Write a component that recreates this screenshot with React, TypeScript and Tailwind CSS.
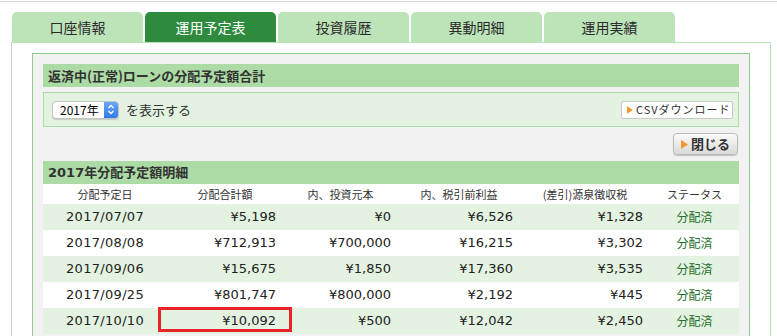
import React from 'react';

const tabs = ['口座情報', '運用予定表', '投資履歴', '異動明細', '運用実績'];

const rows = [
  { date: '2017/07/07', total: '¥5,198', principal: '¥0', profit: '¥6,526', tax: '¥1,328', status: '分配済' },
  { date: '2017/08/08', total: '¥712,913', principal: '¥700,000', profit: '¥16,215', tax: '¥3,302', status: '分配済' },
  { date: '2017/09/06', total: '¥15,675', principal: '¥1,850', profit: '¥17,360', tax: '¥3,535', status: '分配済' },
  { date: '2017/09/25', total: '¥801,747', principal: '¥800,000', profit: '¥2,192', tax: '¥445', status: '分配済' },
  { date: '2017/10/10', total: '¥10,092', principal: '¥500', profit: '¥12,042', tax: '¥2,450', status: '分配済', mark: true },
];

const cols = 'grid grid-cols-[124px_116px_115px_122px_130px_89px]';

function Arrow({ size = 7 }: { size?: number }) {
  return (
    <svg width={size} height={size + 2} viewBox="0 0 7 9" className="shrink-0">
      <polygon points="0,0 7,4.5 0,9" fill="#f5962f" />
    </svg>
  );
}

export default function App() {
  return (
    <div className="w-[777px] h-[336px] overflow-hidden bg-white font-['DejaVu_Sans','Noto_Sans_CJK_JP',sans-serif] text-[#333]">
      <div className="mt-px h-px bg-[#dcdcdc]" />

      {/* タブ */}
      <div className="mt-[10px] pl-[12px] flex gap-[2px]">
        {tabs.map((t, i) => (
          <div
            key={t}
            className={
              'w-[131px] h-[30px] rounded-t-[5px] flex items-center justify-center text-[14px] font-[\'Noto_Sans_CJK_JP\',sans-serif] ' +
              (i === 1 ? 'bg-[#2e8b3e] text-white' : 'bg-[#bde3b9] text-[#2b2b2b]')
            }
          >
            {t}
          </div>
        ))}
      </div>

      <div className="ml-[11px] w-[760px] border border-[#b9e0b4] px-5 pt-[10px] h-[300px]">
        <div className="border border-[#8fce8a] bg-[#f2f2f2] p-[10px] h-[300px]">
          {/* 合計 */}
          <div className="h-[23px] bg-[#acdba5] pl-[5px] flex items-center text-[13px] font-bold text-[#333] font-['Noto_Sans_CJK_JP',sans-serif]">
            返済中(正常)ローンの分配予定額合計
          </div>
          <div className="mt-[5px] h-[35px] border border-[#b0dcab] bg-[#e4f2e2] pl-2 pr-[5px] flex items-center justify-between">
            <div className="flex items-center gap-[7px]">
              <div className="w-[67px] h-[18px] rounded-[4px] bg-white border border-[#c4c4c4] shadow-[0_1px_1px_rgba(0,0,0,0.15)] flex items-center overflow-hidden">
                <span className="flex-1 pl-[7px] text-[12px] text-black font-['Noto_Sans_CJK_JP',sans-serif] leading-none">2017年</span>
                <span className="w-[14px] h-full bg-gradient-to-b from-[#6aa8f7] to-[#2f7ae8] flex items-center justify-center">
                  <svg width="8" height="11" viewBox="0 0 8 11">
                    <path d="M1.5 4 L4 1.5 L6.5 4 M1.5 7 L4 9.5 L6.5 7" stroke="white" strokeWidth="1.4" fill="none" />
                  </svg>
                </span>
              </div>
              <span className="text-[13px] font-['Noto_Sans_CJK_JP',sans-serif]">を表示する</span>
            </div>
            <div className="w-[112px] h-[18px] bg-white border border-[#c8c8c8] rounded-[2px] flex items-center gap-[3px] pl-[5px] text-[11px] text-[#333] font-['Noto_Sans_CJK_JP',sans-serif]">
              <Arrow size={6} />
              <span className="tracking-[1px]">CSVダウンロード</span>
            </div>
          </div>

          <div className="mt-[6px] flex justify-end pr-px">
            <div className="w-[65px] h-[22px] rounded-[4px] border border-[#bcbcbc] bg-gradient-to-b from-[#fbfbfb] to-[#d9d9d9] shadow-[0_1px_1px_rgba(0,0,0,0.2)] flex items-center justify-center gap-[3px] text-[13px] font-bold text-[#333] font-['Noto_Sans_CJK_JP',sans-serif]">
              <Arrow size={7} />
              <span>閉じる</span>
            </div>
          </div>

          {/* 明細 */}
          <div className="mt-[6px] h-[23px] bg-[#acdba5] pl-[5px] flex items-center text-[13px] font-bold text-[#333]">
            2017年分配予定額明細
          </div>
          <div className={cols + ' h-[20px] bg-white items-center text-center text-[11px] font-[\'Noto_Sans_CJK_JP\',sans-serif] text-[#333]'}>
            <div>分配予定日</div>
            <div>分配合計額</div>
            <div>内、投資元本</div>
            <div>内、税引前利益</div>
            <div>(差引)源泉徴収税</div>
            <div>ステータス</div>
          </div>
          {rows.map((r, i) => (
            <div
              key={r.date}
              className={cols + ' h-[26px] items-center text-[13px] text-[#222] ' + (i % 2 === 0 ? 'bg-[#e4f2e2]' : 'bg-white')}
            >
              <div className="text-center tracking-[0.3px]">{r.date}</div>
              <div className="relative h-full flex items-center justify-end pr-[7px]">
                {r.total}
                {r.mark && <div className="absolute left-[-9px] right-[-9px] top-[-1px] bottom-[2px] border-[3px] border-[#e8232a]" />}
              </div>
              <div className="text-right pr-[7px]">{r.principal}</div>
              <div className="text-right pr-[7px]">{r.profit}</div>
              <div className="text-right pr-[7px]">{r.tax}</div>
              <div className="text-center text-[12px] text-[#23702a] font-['Noto_Sans_CJK_JP',sans-serif]">{r.status}</div>
            </div>
          ))}
        </div>
      </div>
    </div>
  );
}
